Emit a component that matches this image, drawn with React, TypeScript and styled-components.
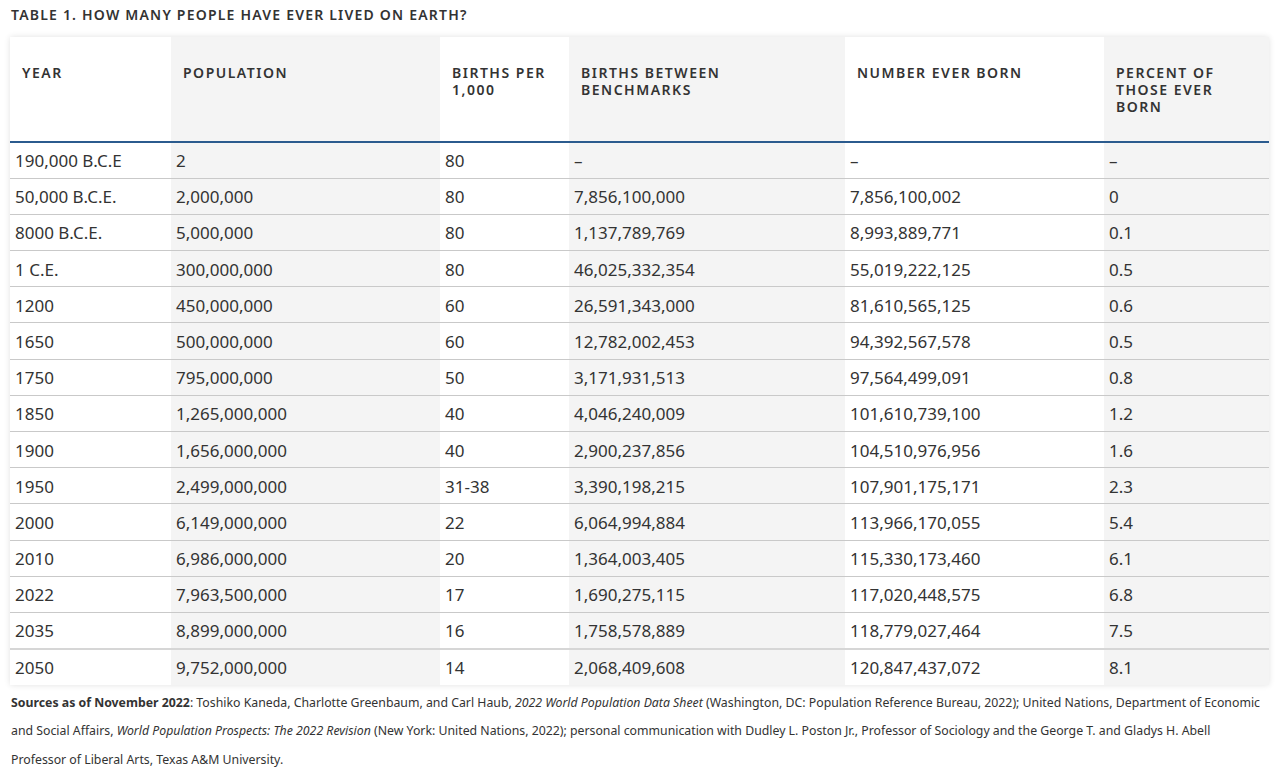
import React from "react";
import styled, { createGlobalStyle } from "styled-components";

const GlobalStyle = createGlobalStyle`
  html, body {
    margin: 0;
    padding: 0;
    background: #fff;
  }
  body {
    font-family: "Noto Sans", "Open Sans", sans-serif;
    color: #333;
  }
`;

const Page = styled.div`
  width: 1280px;
  padding: 6px 10px 0 10px;
  box-sizing: border-box;
`;

const Caption = styled.div`
  font-size: 14px;
  font-weight: 600;
  letter-spacing: 1.2px;
  color: #333;
  line-height: 18px;
  padding-left: 1px;
  margin-bottom: 13px;
`;

const Table = styled.table`
  width: 1259px;
  border-collapse: collapse;
  table-layout: fixed;
  box-shadow: 0 0 6px rgba(0, 0, 0, 0.12);
`;

const HeadCell = styled.th<{ $shaded?: boolean }>`
  height: 105px;
  box-sizing: border-box;
  padding: 27px 8px 0 12px;
  vertical-align: top;
  text-align: left;
  font-size: 14px;
  line-height: 17px;
  font-weight: 600;
  letter-spacing: 1.5px;
  color: #333;
  background: ${(p) => (p.$shaded ? "#f4f4f4" : "#fff")};
  border-bottom: 2px solid #2b5b8e;
`;

const HeadLabel = styled.span<{ $max?: number }>`
  display: block;
  max-width: ${(p) => (p.$max ? `${p.$max}px` : "none")};
`;

const Row = styled.tr<{ $last?: boolean }>`
  height: 36.2px;
  border-top: ${(p) => (p.$last ? "2px solid #d6d6d6" : "none")};
  border-bottom: ${(p) => (p.$last ? "none" : "1px solid #c9c9c9")};
`;

const Cell = styled.td<{ $shaded?: boolean }>`
  padding: 2px 5px 0 5px;
  font-size: 17px;
  line-height: 22px;
  color: #333;
  white-space: nowrap;
  background: ${(p) => (p.$shaded ? "#f4f4f4" : "#fff")};
`;

const Sources = styled.p`
  width: 1254px;
  margin: 4px 0 0 1px;
  font-size: 12.3px;
  line-height: 28.6px;
  color: #333;
  b {
    font-weight: 700;
  }
`;

const COLUMNS = [
  { label: "YEAR", width: 161, shaded: false },
  { label: "POPULATION", width: 269, shaded: true },
  { label: "BIRTHS PER 1,000", width: 129, shaded: false, max: 112 },
  { label: "BIRTHS BETWEEN BENCHMARKS", width: 276, shaded: true, max: 200 },
  { label: "NUMBER EVER BORN", width: 259, shaded: false },
  { label: "PERCENT OF THOSE EVER BORN", width: 165, shaded: true, max: 120 },
];

const ROWS = [
  ["190,000 B.C.E", "2", "80", "–", "–", "–"],
  ["50,000 B.C.E.", "2,000,000", "80", "7,856,100,000", "7,856,100,002", "0"],
  ["8000 B.C.E.", "5,000,000", "80", "1,137,789,769", "8,993,889,771", "0.1"],
  ["1 C.E.", "300,000,000", "80", "46,025,332,354", "55,019,222,125", "0.5"],
  ["1200", "450,000,000", "60", "26,591,343,000", "81,610,565,125", "0.6"],
  ["1650", "500,000,000", "60", "12,782,002,453", "94,392,567,578", "0.5"],
  ["1750", "795,000,000", "50", "3,171,931,513", "97,564,499,091", "0.8"],
  ["1850", "1,265,000,000", "40", "4,046,240,009", "101,610,739,100", "1.2"],
  ["1900", "1,656,000,000", "40", "2,900,237,856", "104,510,976,956", "1.6"],
  ["1950", "2,499,000,000", "31-38", "3,390,198,215", "107,901,175,171", "2.3"],
  ["2000", "6,149,000,000", "22", "6,064,994,884", "113,966,170,055", "5.4"],
  ["2010", "6,986,000,000", "20", "1,364,003,405", "115,330,173,460", "6.1"],
  ["2022", "7,963,500,000", "17", "1,690,275,115", "117,020,448,575", "6.8"],
  ["2035", "8,899,000,000", "16", "1,758,578,889", "118,779,027,464", "7.5"],
  ["2050", "9,752,000,000", "14", "2,068,409,608", "120,847,437,072", "8.1"],
];

export default function App() {
  return (
    <>
      <GlobalStyle />
      <Page>
        <Caption>TABLE 1. HOW MANY PEOPLE HAVE EVER LIVED ON EARTH?</Caption>
        <Table>
          <colgroup>
            {COLUMNS.map((c) => (
              <col key={c.label} style={{ width: c.width }} />
            ))}
          </colgroup>
          <thead>
            <tr>
              {COLUMNS.map((c) => (
                <HeadCell key={c.label} $shaded={c.shaded}>
                  <HeadLabel $max={c.max}>{c.label}</HeadLabel>
                </HeadCell>
              ))}
            </tr>
          </thead>
          <tbody>
            {ROWS.map((row, i) => (
              <Row key={row[0]} $last={i === ROWS.length - 1}>
                {row.map((value, j) => (
                  <Cell key={j} $shaded={COLUMNS[j].shaded}>
                    {value}
                  </Cell>
                ))}
              </Row>
            ))}
          </tbody>
        </Table>
        <Sources>
          <b>Sources as of November 2022</b>: Toshiko Kaneda, Charlotte
          Greenbaum, and Carl Haub, <i>2022 World Population Data Sheet</i>{" "}
          (Washington, DC: Population Reference Bureau, 2022); United Nations,
          Department of Economic and Social Affairs,{" "}
          <i>World Population Prospects: The 2022 Revision</i> (New York: United
          Nations, 2022); personal communication with Dudley L. Poston Jr.,
          Professor of Sociology and the George T. and Gladys H. Abell Professor
          of Liberal Arts, Texas A&amp;M University.
        </Sources>
      </Page>
    </>
  );
}
